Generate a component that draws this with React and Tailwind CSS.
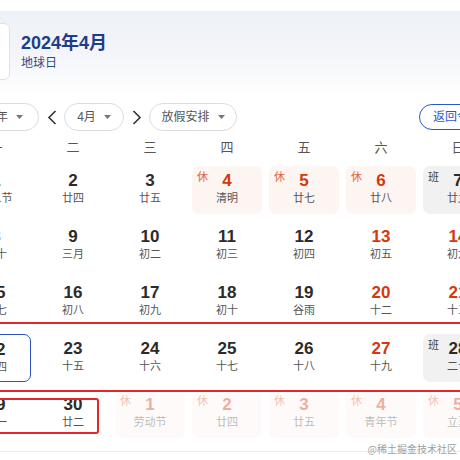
import React from "react";

const rows = [
  [
    { d: 1, l: "愚人节" },
    { d: 2, l: "廿四" },
    { d: 3, l: "廿五" },
    { d: 4, l: "清明", t: "休" },
    { d: 5, l: "廿七", t: "休" },
    { d: 6, l: "廿八", t: "休" },
    { d: 7, l: "廿九", t: "班" },
  ],
  [
    { d: 8, l: "三十" },
    { d: 9, l: "三月" },
    { d: 10, l: "初二" },
    { d: 11, l: "初三" },
    { d: 12, l: "初四" },
    { d: 13, l: "初五", red: true },
    { d: 14, l: "初六", red: true },
  ],
  [
    { d: 15, l: "初七" },
    { d: 16, l: "初八" },
    { d: 17, l: "初九" },
    { d: 18, l: "初十" },
    { d: 19, l: "谷雨" },
    { d: 20, l: "十二", red: true },
    { d: 21, l: "十三", red: true },
  ],
  [
    { d: 22, l: "十四", sel: true },
    { d: 23, l: "十五" },
    { d: 24, l: "十六" },
    { d: 25, l: "十七" },
    { d: 26, l: "十八" },
    { d: 27, l: "十九", red: true },
    { d: 28, l: "二十", t: "班" },
  ],
  [
    { d: 29, l: "廿一" },
    { d: 30, l: "廿二" },
    { d: 1, l: "劳动节", t: "休", fade: true },
    { d: 2, l: "廿四", t: "休", fade: true },
    { d: 3, l: "廿五", t: "休", fade: true },
    { d: 4, l: "青年节", t: "休", fade: true },
    { d: 5, l: "立夏", t: "休", fade: true },
  ],
];

const weekdays = ["一", "二", "三", "四", "五", "六", "日"];

function Caret() {
  return (
    <svg width="7" height="4" viewBox="0 0 7 4" className="shrink-0">
      <path d="M0 0h7L3.5 4z" fill="#777" />
    </svg>
  );
}

function Chevron({ dir }) {
  return (
    <div className="w-[25px] h-[28px] shrink-0 flex items-center justify-center">
      <svg width="10" height="15" viewBox="0 0 10 15">
        {dir === "left" ? (
          <path d="M8.5 1L2 7.5l6.5 6.5" stroke="#333" strokeWidth="1.6" fill="none" />
        ) : (
          <path d="M1.5 1L8 7.5 1.5 14" stroke="#333" strokeWidth="1.6" fill="none" />
        )}
      </svg>
    </div>
  );
}

function Cell({ c }) {
  const isRest = c.t === "休";
  const isWork = c.t === "班";
  const bg = isRest ? "bg-[#fdf5f2]" : isWork ? "bg-[#f1f1f1]" : "bg-white";
  const numColor = isRest || c.red ? "text-[#d4380d]" : "text-[#2b2b2b]";
  return (
    <div
      className={
        "relative h-[48px] rounded-[7px] flex flex-col items-center pt-[5px] " +
        bg +
        (c.fade ? " opacity-40" : "") +
        (c.sel ? " border-[1.5px] border-[#2b52c5]" : "")
      }
    >
      {c.t && (
        <span
          className={
            "absolute left-[5px] top-[4px] text-[11px] leading-[14px] " +
            (isRest ? "text-[#e4643f]" : "text-[#444]")
          }
        >
          {c.t}
        </span>
      )}
      <span className={"text-[17px] font-bold leading-[20px] " + numColor}>{c.d}</span>
      <span className="text-[11px] leading-[14px] text-[#555] whitespace-nowrap">{c.l}</span>
    </div>
  );
}

export default function App() {
  return (
    <div className="relative w-[460px] h-[460px] overflow-hidden bg-white font-['Liberation_Sans','Noto_Sans_CJK_SC',sans-serif]">
      <div className="h-[11px] bg-white" />
      <div className="h-[84px] border-t border-[#eceef3] bg-gradient-to-b from-[#eef1f7] via-[#f3f5fa] to-white flex items-start pt-[11px]">
        <div className="-ml-[40px] w-[50px] h-[57px] shrink-0 rounded-[6px] border border-[#e2e2e2] bg-white" />
        <div className="ml-[11px] pt-[8px] flex flex-col">
          <span className="text-[18px] font-bold leading-[24px] text-[#1c3d89]">2024年4月</span>
          <span className="text-[12px] leading-[16px] text-[#2a4b8d]">地球日</span>
        </div>
      </div>

      <div className="mt-[8px] h-[28px] flex items-center w-max">
        <div className="-ml-[43px] w-[82px] h-[28px] shrink-0 rounded-full border border-[#dcdcdc] flex items-center justify-end pr-[15px] gap-[8px] text-[12px] text-[#555]">
          <span className="whitespace-nowrap">2024年</span>
          <Caret />
        </div>
        <Chevron dir="left" />
        <div className="w-[60px] h-[28px] shrink-0 rounded-full border border-[#dcdcdc] flex items-center justify-center gap-[8px] text-[12px] text-[#555]">
          <span className="whitespace-nowrap">4月</span>
          <Caret />
        </div>
        <Chevron dir="right" />
        <div className="w-[88px] h-[28px] shrink-0 rounded-full border border-[#dcdcdc] flex items-center justify-center gap-[8px] text-[12px] text-[#555]">
          <span className="whitespace-nowrap">放假安排</span>
          <Caret />
        </div>
        <div className="ml-[182px] h-[26px] w-[90px] shrink-0 rounded-full border border-[#2d56c8] flex items-center pl-[13px] text-[12px] text-[#2d56c8] whitespace-nowrap">
          返回今天
        </div>
      </div>

      <div className="-ml-[39px] mt-[5px] grid grid-cols-[repeat(7,70px)] gap-x-[7px] h-[24px] items-center">
        {weekdays.map((w) => (
          <div key={w} className="text-center text-[13px] text-[#555] leading-[24px]">
            {w}
          </div>
        ))}
      </div>

      <div className="-ml-[39px] mt-[6px] grid grid-cols-[repeat(7,70px)] gap-x-[7px] gap-y-[8px]">
        {rows.flat().map((c, i) => (
          <Cell key={i} c={c} />
        ))}
      </div>

      <div className="mt-[13px] border-t border-[#ececec]" />

      <div className="absolute -left-[10px] -right-[10px] top-[322px] h-[70px] border-2 border-[#e4262a]" />
      <div className="absolute -left-[10px] top-[398px] w-[109px] h-[36px] border-2 border-[#e4262a] rounded-[3px]" />

      <div className="absolute right-[3px] top-[442px] text-[10px] leading-[14px] text-[#a0a0a0] font-['Noto_Sans_CJK_SC',sans-serif]">
        @稀土掘金技术社区
      </div>
    </div>
  );
}
